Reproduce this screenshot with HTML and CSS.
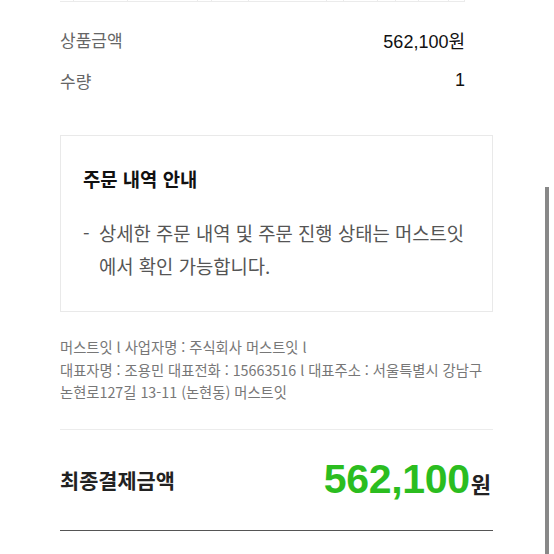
FILE: index.html
```html
<!DOCTYPE html>
<html lang="ko">
<head>
<meta charset="utf-8"/>
<meta content="width=device-width, initial-scale=1.0" name="viewport"/>
<title>주문 완료</title>
<link rel="stylesheet" href="styles.css">
</head>
<body>
<div class="page">

<div class="table-edge">
    <span style="width:13px"></span>
    <span style="width:55px"></span>
    <span style="width:71px"></span>
    <span style="width:14px"></span>
    <span style="width:37px"></span>
    <span style="width:79px"></span>
    <span style="width:16px"></span>
    <span style="width:34px"></span>
    <span style="width:18px"></span>
    <span style="width:23px"></span>
    <span style="width:30px"></span>
    <span style="width:15px"></span>
</div>

<div class="summary">
    <div class="summary-row">
        <span class="label">상품금액</span>
        <span class="value">562,100원</span>
    </div>
    <div class="summary-row">
        <span class="label">수량</span>
        <span class="value">1</span>
    </div>
</div>

<div class="notice">
    <h2 class="notice-title">주문 내역 안내</h2>
    <div class="notice-item">
        <span class="dash">-</span>
        <p>상세한 주문 내역 및 주문 진행 상태는 머스트잇에서 확인 가능합니다.</p>
    </div>
</div>

<p class="company">
    머스트잇 l 사업자명 : 주식회사 머스트잇 l<br>
    대표자명 : 조용민 대표전화 : 15663516 l 대표주소 : 서울특별시 강남구<br>
    논현로127길 13-11 (논현동) 머스트잇
</p>

<div class="total">
    <span class="total-label">최종결제금액</span>
    <span class="total-price"><b>562,100</b>원</span>
</div>

</div>

<div class="scrollbar"></div>
</body>
</html>
```

FILE: styles.css
```css
body {
    margin: 0;
    padding: 0;
    background: #ffffff;
    font-family: "Noto Sans CJK KR", "Liberation Sans", sans-serif;
    color: #222222;
    overflow: hidden;
}

.page {
    padding: 0 61px 0 60px;
}

/* bottom edge of the table above */
.table-edge {
    display: flex;
    height: 1px;
    margin-right: 28px;
    border-bottom: 1px solid #ebebeb;
}

.table-edge span {
    border-right: 1px solid #ebebeb;
}

.summary {
    margin-top: 17px;
    padding-right: 28px;
}

.summary-row {
    display: flex;
    justify-content: space-between;
    align-items: center;
    height: 41px;
}

.label {
    font-size: 17px;
    color: #666666;
}

.value {
    font-family: "Liberation Sans", "Noto Sans CJK KR", sans-serif;
    font-size: 18px;
    color: #111111;
}

/* order notice box */
.notice {
    margin-top: 34px;
    border: 1px solid #e9e9e9;
    padding: 29px 22px 29px 22px;
}

.notice-title {
    margin: 0;
    font-size: 18.8px;
    line-height: 28px;
    font-weight: bold;
    color: #111111;
}

.notice-item {
    display: flex;
    margin-top: 23px;
    font-size: 18.8px;
    line-height: 33px;
    color: #555555;
}

.dash {
    flex: 0 0 16px;
}

.notice-item p {
    margin: 0;
}

.company {
    margin: 24px 0 0 0;
    font-size: 14.3px;
    line-height: 22.5px;
    color: #777777;
    white-space: nowrap;
}

.total {
    display: flex;
    justify-content: space-between;
    align-items: center;
    height: 100px;
    margin-top: 25px;
    border-top: 1px solid #ececec;
    border-bottom: 1px solid #555555;
    padding-right: 2px;
}

.total-label {
    font-size: 20.8px;
    font-weight: bold;
    color: #222222;
}

.total-price {
    font-size: 22px;
    font-weight: bold;
    color: #222222;
}

.total-price b {
    font-family: "Liberation Sans", sans-serif;
    font-size: 41px;
    letter-spacing: -0.3px;
    color: #2bbd1f;
    margin-right: 1px;
}

.scrollbar {
    position: absolute;
    left: 545px;
    top: 187px;
    width: 4px;
    height: 380px;
    background: #888888;
}
```
